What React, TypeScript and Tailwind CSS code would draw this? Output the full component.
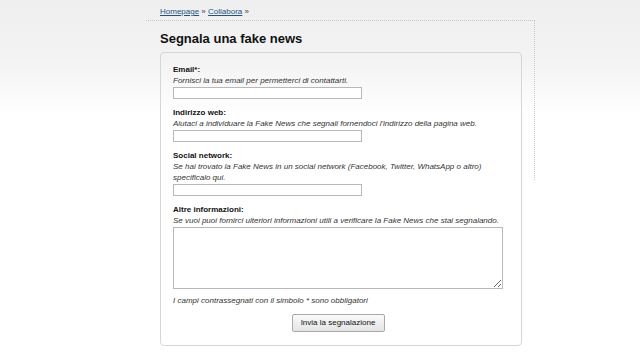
import React from 'react'

const font = { fontFamily: '"Liberation Sans", Arial, sans-serif' }

function Field({ label, hint, children, last }: { label: string; hint: React.ReactNode; children: React.ReactNode; last?: boolean }) {
  return (
    <div className={last ? 'mb-0' : 'mb-[8px]'}>
      <div className="text-[8px] font-bold leading-[11px] text-[#111]">{label}</div>
      <div className="text-[8px] italic leading-[11px] text-[#333]">{hint}</div>
      <div className="mt-[1px]">{children}</div>
    </div>
  )
}

export default function App() {
  return (
    <div
      className="min-h-[360px] w-[640px] bg-[linear-gradient(#efefef_0px,#f3f3f3_60px,#ffffff_115px)] text-[#111]"
      style={font}
    >
      <div className="pl-[160px] pt-[6px] text-[8px] leading-[12px] text-[#444]">
        <a className="text-[#24527f] underline">Homepage</a> » <a className="text-[#24527f] underline">Collabora</a> »
      </div>

      <div className="ml-[146px] mt-[2px] h-[160px] w-[389px] border-t border-r border-dotted border-[#c8c8c8]">
        <div className="pl-[14px] pt-[8px]">
          <h1 className="text-[13px] font-bold leading-[20px] text-[#111]">Segnala una fake news</h1>

          <form className="mt-[3px] w-[362px] rounded-[4px] border border-[#d6d6d6] pl-[12px] pr-[18px] pt-[11px] pb-[13px]">
            <Field label="Email*:" hint="Fornisci la tua email per permetterci di contattarti.">
              <input className="block h-[12px] w-[189px] border border-[#b8b8b8] bg-white" />
            </Field>
            <Field label="Indirizzo web:" hint="Aiutaci a individuare la Fake News che segnali fornendoci l'indirizzo della pagina web.">
              <input className="block h-[12px] w-[189px] border border-[#b8b8b8] bg-white" />
            </Field>
            <Field
              label="Social network:"
              hint={<>Se hai trovato la Fake News in un social network (Facebook, Twitter, WhatsApp o altro)<br />specificalo qui.</>}
            >
              <input className="block h-[12px] w-[189px] border border-[#b8b8b8] bg-white" />
            </Field>
            <Field last label="Altre informazioni:" hint="Se vuoi puoi fornirci ulteriori informazioni utili a verificare la Fake News che stai segnalando.">
              <textarea className="block h-[62px] w-[330px] resize border border-[#b8b8b8] bg-white" />
            </Field>

            <div className="mt-[6px] text-[8px] italic leading-[11px] text-[#333]">
              I campi contrassegnati con il simbolo * sono obbligatori
            </div>
            <div className="mt-[8px] flex justify-center">
              <button
                type="button"
                className="h-[18px] w-[93px] rounded-[2px] border border-[#a9a9a9] bg-[linear-gradient(#fafafa,#e4e4e4)] text-[8px] text-[#111]"
              >
                Invia la segnalazione
              </button>
            </div>
          </form>
        </div>
      </div>
    </div>
  )
}
